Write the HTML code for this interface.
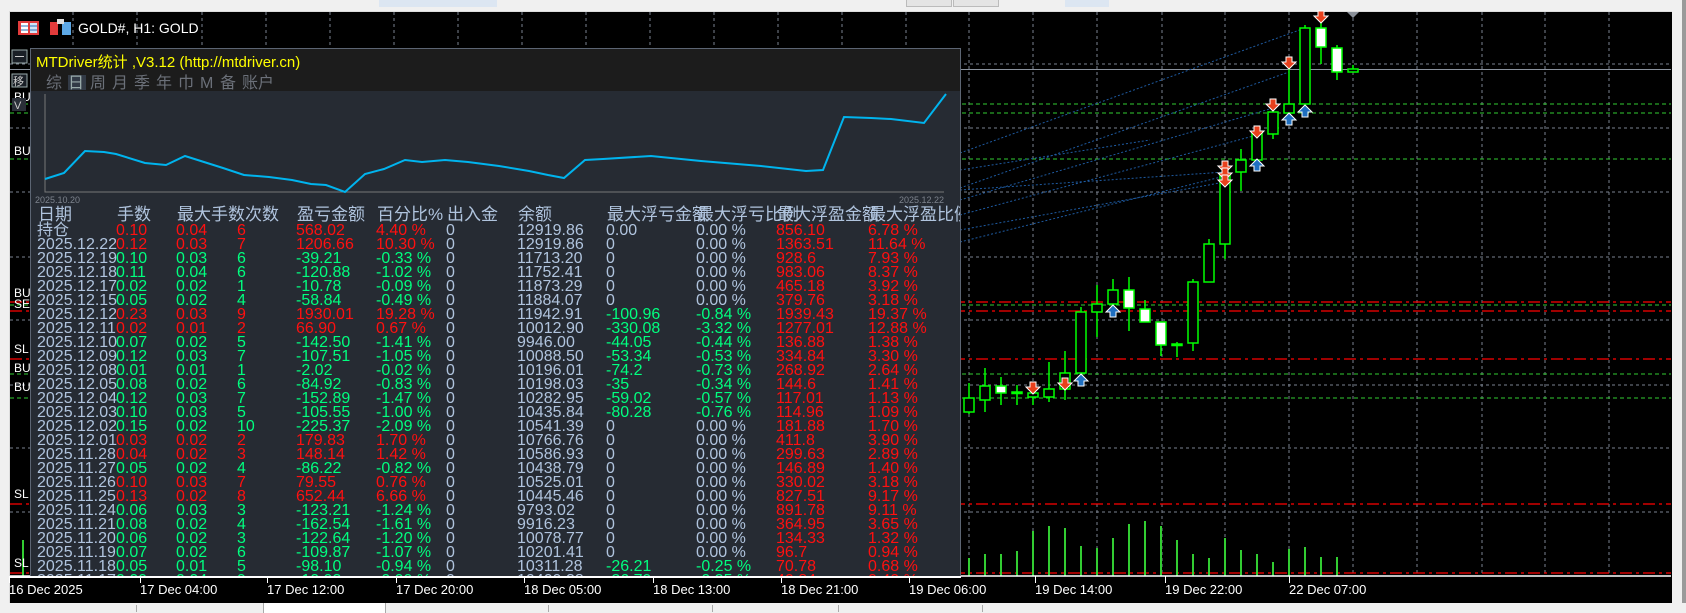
<!DOCTYPE html>
<html><head><meta charset="utf-8">
<style>
html,body{margin:0;padding:0;width:1686px;height:612px;overflow:hidden;background:#f0f0f0;font-family:"Liberation Sans","Noto Sans CJK SC",sans-serif;}
#top{position:absolute;left:0;top:0;width:1686px;height:10px;background:#f0f0f0;}
#chart{position:absolute;left:9px;top:11px;width:1662px;height:592px;background:#000;border-top:1px solid #ddd;border-left:1px solid #ddd;}
svg{position:absolute;left:0;top:0;}
#panel{position:absolute;left:30px;top:48px;width:929px;height:555px;background:#262b33;border:1px solid #5c6573;border-bottom:none;overflow:hidden;}
#ptitle{position:absolute;left:0;top:0;width:929px;height:42px;background:#1c1c1c;}
.t{position:absolute;white-space:pre;font-size:16px;line-height:16px;}
.b{color:#b0c4de}.r{color:#ff1010}.g{color:#00ff7f}
.tab{position:absolute;top:27px;font-size:16px;color:#6b7079;line-height:16px;}
#tabs{position:absolute;left:0;top:603px;width:1686px;height:9px;background:#f0f0f0;}
</style></head><body>
<div id="top">
 <div style="position:absolute;left:379px;top:0;width:118px;height:7px;background:#dce6f2"></div>
 <div style="position:absolute;left:906px;top:0;width:44px;height:6px;background:#e4e4e4;border:1px solid #bbb;border-top:none"></div>
 <div style="position:absolute;left:953px;top:0;width:44px;height:6px;background:#e4e4e4;border:1px solid #bbb;border-top:none"></div>
 <div style="position:absolute;left:1065px;top:0;width:44px;height:7px;background:#dce6f2"></div>
</div>
<div style="position:absolute;left:1682px;top:0;width:4px;height:612px;background:#9a9a9a"></div>
<div id="chart"></div>
<svg width="1686" height="612" viewBox="0 0 1686 612">
<defs>
 <g id="dn"><polygon points="-3,-6 3,-6 3,-1 7,-1 0,6 -7,-1 -3,-1" fill="#e8401c" stroke="#fff" stroke-width="1"/></g>
 <g id="up"><polygon points="-3,6 3,6 3,1 7,1 0,-6 -7,1 -3,1" fill="#1f6fc0" stroke="#fff" stroke-width="1"/></g>
</defs>
<g stroke="#7a8290" stroke-width="1" stroke-dasharray="3,3" fill="none">
 <path d="M10,64H1671M10,128H1671M10,192H1671M10,257H1671M10,320H1671M10,385H1671M10,448H1671M10,512H1671"/>
 <path d="M73,12V576M137,12V576M202,12V576M266,12V576M330,12V576M394,12V576M458,12V576M522,12V576M586,12V576M650,12V576M714,12V576M778,12V576M842,12V576M906,12V576M969,12V576M1033,12V576M1097,12V576M1162,12V576M1225,12V576M1289,12V576M1353,12V576M1417,12V576M1482,12V576M1545,12V576M1609,12V576"/>
</g>
<path d="M10,69.5H1671" stroke="#8a929e" stroke-width="1"/>
<g stroke="#32cd32" stroke-width="1" stroke-dasharray="4,3" fill="none">
 <path d="M10,104H1671M10,113H1671M10,159H1671M10,305H1671M10,374H1671M10,398H1671"/>
</g>
<g stroke="#ff0000" stroke-width="1.3" stroke-dasharray="12,4,3,4" fill="none">
 <path d="M10,302H1671M10,311H1671M10,359H1671M10,504H1671M10,573H1671"/>
</g>
<g stroke="#1e5aa0" stroke-width="1" stroke-dasharray="2,2" fill="none">
 <path d="M960,153L1305,28M960,188L1289,72M960,200L1273,108M960,215L1257,135M960,230L1225,182M960,242L1225,176M960,190L1225,172M960,170L1150,140"/>
</g>
<polygon points="1347,12 1359,12 1353,18" fill="#8a9099"/>
<g fill="#32cd32">
<rect x="968" y="558" width="2" height="18"/><rect x="984" y="554" width="2" height="22"/><rect x="1000" y="554" width="2" height="22"/><rect x="1016" y="551" width="2" height="25"/><rect x="1032" y="531" width="2" height="45"/><rect x="1048" y="526" width="2" height="50"/><rect x="1064" y="528" width="2" height="48"/><rect x="1080" y="546" width="2" height="30"/><rect x="1096" y="548" width="2" height="28"/><rect x="1112" y="538" width="2" height="38"/><rect x="1128" y="524" width="2" height="52"/><rect x="1144" y="521" width="2" height="55"/><rect x="1160" y="526" width="2" height="50"/><rect x="1176" y="540" width="2" height="36"/><rect x="1192" y="554" width="2" height="22"/>
<rect x="1208" y="558" width="2" height="18"/><rect x="1224" y="538" width="2" height="38"/><rect x="1240" y="550" width="2" height="26"/><rect x="1256" y="554" width="2" height="22"/><rect x="1272" y="562" width="2" height="14"/><rect x="1288" y="549" width="2" height="27"/><rect x="1304" y="547" width="2" height="29"/><rect x="1320" y="557" width="2" height="19"/><rect x="1336" y="557" width="2" height="19"/>
<rect x="22" y="540" width="2" height="36"/>
</g>
<g stroke="#00ff00" stroke-width="1.5">
<path d="M969,383V414M985,368V412M1001,377V405M1017,385V405M1033,385V405M1049,362V402M1065,351V400M1081,307V373M1097,285V337M1113,279V305M1129,277V331M1145,300V322M1161,322V356M1177,342V357M1193,279V351M1209,239V282M1225,167V259M1241,149V191M1257,126V160M1273,112V139M1289,67V113M1305,25V104M1321,23V64M1337,45V80M1353,65V72"/>
</g>
<g stroke="#00ff00" stroke-width="1.5">
<rect x="964" y="398" width="10" height="14" fill="#000"/>
<rect x="980" y="386" width="10" height="14" fill="#000"/>
<rect x="996" y="386" width="10" height="7" fill="#fff"/>
<rect x="1012" y="392" width="10" height="1.5" fill="#fff"/>
<rect x="1028" y="393" width="10" height="4" fill="#000"/>
<rect x="1044" y="389" width="10" height="8" fill="#000"/>
<rect x="1060" y="373" width="10" height="16" fill="#000"/>
<rect x="1076" y="312" width="10" height="61" fill="#000"/>
<rect x="1092" y="304" width="10" height="8" fill="#000"/>
<rect x="1108" y="290" width="10" height="14" fill="#000"/>
<rect x="1124" y="290" width="10" height="18" fill="#fff"/>
<rect x="1140" y="309" width="10" height="13" fill="#fff"/>
<rect x="1156" y="322" width="10" height="23" fill="#fff"/>
<rect x="1172" y="344" width="10" height="1.5" fill="#fff"/>
<rect x="1188" y="282" width="10" height="61" fill="#000"/>
<rect x="1204" y="244" width="10" height="38" fill="#000"/>
<rect x="1220" y="174" width="10" height="70" fill="#000"/>
<rect x="1236" y="160" width="10" height="12" fill="#000"/>
<rect x="1252" y="133" width="10" height="27" fill="#000"/>
<rect x="1268" y="112" width="10" height="22" fill="#000"/>
<rect x="1284" y="104" width="10" height="9" fill="#000"/>
<rect x="1300" y="28" width="10" height="76" fill="#000"/>
<rect x="1316" y="28" width="10" height="19" fill="#fff"/>
<rect x="1332" y="48" width="10" height="24" fill="#fff"/>
<rect x="1348" y="69" width="10" height="3" fill="#000"/>
</g>
<use href="#dn" x="1321" y="17"/><use href="#dn" x="1289" y="63"/><use href="#dn" x="1273" y="105"/><use href="#dn" x="1257" y="132"/><use href="#dn" x="1225" y="167"/><use href="#dn" x="1225" y="174"/><use href="#dn" x="1225" y="181"/><use href="#dn" x="1033" y="388"/><use href="#dn" x="1065" y="384"/>
<use href="#up" x="1305" y="111"/><use href="#up" x="1289" y="119"/><use href="#up" x="1257" y="165"/><use href="#up" x="1113" y="311"/><use href="#up" x="1081" y="380"/>
<path d="M10,576H1671" stroke="#fff" stroke-width="1.5"/>
<g stroke="#fff"><path d="M1035.5,576V583M1165.5,576V583M1289.5,576V583"/></g>
<g fill="#fff" font-family="Liberation Sans,sans-serif" font-size="13">
<text x="1035" y="594">19 Dec 14:00</text><text x="1165" y="594">19 Dec 22:00</text><text x="1289" y="594">22 Dec 07:00</text>
</g>
<g font-family="Liberation Sans,sans-serif" font-size="12" fill="#fff">
<text x="14" y="101">BU</text><text x="14" y="155">BU</text><text x="14" y="297">BU</text><text x="14" y="308">SE</text><text x="14" y="353">SL</text><text x="14" y="372">BU</text><text x="14" y="391">BU</text><text x="14" y="498">SL</text><text x="14" y="567">SL</text>
</g>
<rect x="18" y="21" width="21" height="14" fill="#e23b3b"/><rect x="21" y="23" width="7" height="10" fill="#fff"/><rect x="30" y="23" width="7" height="10" fill="#cfe3f5"/><path d="M21,26H28M21,30H28M30,26H37M30,30H37" stroke="#2a6fb5"/>
<rect x="50" y="22" width="8" height="13" fill="#e23b3b"/><rect x="62" y="22" width="9" height="13" fill="#5da8e6"/><rect x="57" y="19" width="7" height="5" fill="#ddd"/>
<text x="78" y="33" fill="#fff" font-family="Liberation Sans,sans-serif" font-size="14">GOLD#, H1:  GOLD</text>
<rect x="12" y="50" width="15" height="13" fill="#1a1f26" stroke="#9aa" /><path d="M15,56.5H24" stroke="#ccc"/>
<rect x="12" y="74" width="15" height="13" fill="#1a1f26" stroke="#9aa"/><text x="13" y="85" fill="#ccc" font-size="11" font-family="Noto Sans CJK SC,sans-serif">移</text>
<rect x="12" y="98" width="14" height="13" fill="#2a2f38"/><text x="14" y="109" fill="#ccc" font-size="11">V</text>
</svg>
<div id="panel">
 <div id="ptitle"></div>
 <div class="t" style="left:5px;top:6px;color:#ffff00;font-size:15px;">MTDriver统计 ,V3.12 (http://mtdriver.cn)</div>
 <div style="position:absolute;left:37px;top:26px;width:18px;height:15px;background:#323a46"></div>
 <div class="tab" style="left:15px">综</div><div class="tab" style="left:37px;color:#9aa">日</div><div class="tab" style="left:59px">周</div><div class="tab" style="left:81px">月</div><div class="tab" style="left:103px">季</div><div class="tab" style="left:125px">年</div><div class="tab" style="left:147px">巾</div><div class="tab" style="left:169px">M</div><div class="tab" style="left:189px">备</div><div class="tab" style="left:211px">账户</div>
 <svg width="929" height="160" style="left:0;top:0">
  <path d="M14,45V143H913" stroke="#777" fill="none"/>
  <polyline fill="none" stroke="#00b4ee" stroke-width="2" points="14,130 33,124 54,102 73,103 85,105 114,114 135,116 154,107 173,113 192,119 213,126 238,128 261,131 280,135 295,136 314,143 334,125 353,120 374,111 391,113 414,111 437,113 468,117 498,122 517,126 533,129 554,111 572,110 620,107 670,112 730,117 775,122 792,121 813,68 840,69 860,70 893,74 915,45"/>
  <text x="4" y="154" fill="#7d838d" font-size="9" font-family="Liberation Sans,sans-serif">2025.10.20</text>
  <text x="868" y="154" fill="#7d838d" font-size="9" font-family="Liberation Sans,sans-serif">2025.12.22</text>
 </svg>
 <div style="position:absolute;left:-30px;top:-48px;">
 <div class="t b" style="top:206px;left:37px;font-size:17px">日期</div><div class="t b" style="top:206px;left:116px;font-size:17px">手数</div><div class="t b" style="top:206px;left:176px;font-size:17px">最大手数次数</div><div class="t b" style="top:206px;left:296px;font-size:17px">盈亏金额</div><div class="t b" style="top:206px;left:376px;font-size:17px">百分比%</div><div class="t b" style="top:206px;left:446px;font-size:17px">出入金</div><div class="t b" style="top:206px;left:517px;font-size:17px">余额</div><div class="t b" style="top:206px;left:606px;font-size:17px">最大浮亏金额</div><div class="t b" style="top:206px;left:696px;font-size:17px">最大浮亏比例</div><div class="t b" style="top:206px;left:776px;font-size:17px">最大浮盈金额</div><div class="t b" style="top:206px;left:868px;font-size:17px">最大浮盈比例</div>
 </div>
</div>
<div id="tabs">
 <div style="position:absolute;left:263px;top:-3px;width:121px;height:12px;background:#fff;border:1px solid #aaa;border-bottom:none"></div>
 <div style="position:absolute;left:136px;top:2px;width:1px;height:7px;background:#aaa"></div>
 <div style="position:absolute;left:548px;top:2px;width:1px;height:7px;background:#aaa"></div>
 <div style="position:absolute;left:712px;top:2px;width:1px;height:7px;background:#aaa"></div>
 <div style="position:absolute;left:838px;top:2px;width:1px;height:7px;background:#aaa"></div>
 <div style="position:absolute;left:982px;top:2px;width:1px;height:7px;background:#aaa"></div>
</div>
<div style="position:absolute;left:30px;top:48px;width:929px;height:555px;pointer-events:none">
<div style="position:absolute;left:-30px;top:-48px">
<div class="t b" style="top:223px;left:37px">持仓</div><div class="t r" style="top:223px;left:116px">0.10</div><div class="t r" style="top:223px;left:176px">0.04</div><div class="t r" style="top:223px;left:237px">6</div><div class="t r" style="top:223px;left:296px">568.02</div><div class="t r" style="top:223px;left:376px">4.40 %</div><div class="t b" style="top:223px;left:446px">0</div><div class="t b" style="top:223px;left:517px">12919.86</div><div class="t b" style="top:223px;left:606px">0.00</div><div class="t b" style="top:223px;left:696px">0.00 %</div><div class="t r" style="top:223px;left:776px">856.10</div><div class="t r" style="top:223px;left:868px">6.78 %</div>
<div class="t b" style="top:237px;left:37px">2025.12.22</div><div class="t r" style="top:237px;left:116px">0.12</div><div class="t r" style="top:237px;left:176px">0.03</div><div class="t r" style="top:237px;left:237px">7</div><div class="t r" style="top:237px;left:296px">1206.66</div><div class="t r" style="top:237px;left:376px">10.30 %</div><div class="t b" style="top:237px;left:446px">0</div><div class="t b" style="top:237px;left:517px">12919.86</div><div class="t b" style="top:237px;left:606px">0</div><div class="t b" style="top:237px;left:696px">0.00 %</div><div class="t r" style="top:237px;left:776px">1363.51</div><div class="t r" style="top:237px;left:868px">11.64 %</div>
<div class="t b" style="top:251px;left:37px">2025.12.19</div><div class="t g" style="top:251px;left:116px">0.10</div><div class="t g" style="top:251px;left:176px">0.03</div><div class="t g" style="top:251px;left:237px">6</div><div class="t g" style="top:251px;left:296px">-39.21</div><div class="t g" style="top:251px;left:376px">-0.33 %</div><div class="t b" style="top:251px;left:446px">0</div><div class="t b" style="top:251px;left:517px">11713.20</div><div class="t b" style="top:251px;left:606px">0</div><div class="t b" style="top:251px;left:696px">0.00 %</div><div class="t r" style="top:251px;left:776px">928.6</div><div class="t r" style="top:251px;left:868px">7.93 %</div>
<div class="t b" style="top:265px;left:37px">2025.12.18</div><div class="t g" style="top:265px;left:116px">0.11</div><div class="t g" style="top:265px;left:176px">0.04</div><div class="t g" style="top:265px;left:237px">6</div><div class="t g" style="top:265px;left:296px">-120.88</div><div class="t g" style="top:265px;left:376px">-1.02 %</div><div class="t b" style="top:265px;left:446px">0</div><div class="t b" style="top:265px;left:517px">11752.41</div><div class="t b" style="top:265px;left:606px">0</div><div class="t b" style="top:265px;left:696px">0.00 %</div><div class="t r" style="top:265px;left:776px">983.06</div><div class="t r" style="top:265px;left:868px">8.37 %</div>
<div class="t b" style="top:279px;left:37px">2025.12.17</div><div class="t g" style="top:279px;left:116px">0.02</div><div class="t g" style="top:279px;left:176px">0.02</div><div class="t g" style="top:279px;left:237px">1</div><div class="t g" style="top:279px;left:296px">-10.78</div><div class="t g" style="top:279px;left:376px">-0.09 %</div><div class="t b" style="top:279px;left:446px">0</div><div class="t b" style="top:279px;left:517px">11873.29</div><div class="t b" style="top:279px;left:606px">0</div><div class="t b" style="top:279px;left:696px">0.00 %</div><div class="t r" style="top:279px;left:776px">465.18</div><div class="t r" style="top:279px;left:868px">3.92 %</div>
<div class="t b" style="top:293px;left:37px">2025.12.15</div><div class="t g" style="top:293px;left:116px">0.05</div><div class="t g" style="top:293px;left:176px">0.02</div><div class="t g" style="top:293px;left:237px">4</div><div class="t g" style="top:293px;left:296px">-58.84</div><div class="t g" style="top:293px;left:376px">-0.49 %</div><div class="t b" style="top:293px;left:446px">0</div><div class="t b" style="top:293px;left:517px">11884.07</div><div class="t b" style="top:293px;left:606px">0</div><div class="t b" style="top:293px;left:696px">0.00 %</div><div class="t r" style="top:293px;left:776px">379.76</div><div class="t r" style="top:293px;left:868px">3.18 %</div>
<div class="t b" style="top:307px;left:37px">2025.12.12</div><div class="t r" style="top:307px;left:116px">0.23</div><div class="t r" style="top:307px;left:176px">0.03</div><div class="t r" style="top:307px;left:237px">9</div><div class="t r" style="top:307px;left:296px">1930.01</div><div class="t r" style="top:307px;left:376px">19.28 %</div><div class="t b" style="top:307px;left:446px">0</div><div class="t b" style="top:307px;left:517px">11942.91</div><div class="t g" style="top:307px;left:606px">-100.96</div><div class="t g" style="top:307px;left:696px">-0.84 %</div><div class="t r" style="top:307px;left:776px">1939.43</div><div class="t r" style="top:307px;left:868px">19.37 %</div>
<div class="t b" style="top:321px;left:37px">2025.12.11</div><div class="t r" style="top:321px;left:116px">0.02</div><div class="t r" style="top:321px;left:176px">0.01</div><div class="t r" style="top:321px;left:237px">2</div><div class="t r" style="top:321px;left:296px">66.90</div><div class="t r" style="top:321px;left:376px">0.67 %</div><div class="t b" style="top:321px;left:446px">0</div><div class="t b" style="top:321px;left:517px">10012.90</div><div class="t g" style="top:321px;left:606px">-330.08</div><div class="t g" style="top:321px;left:696px">-3.32 %</div><div class="t r" style="top:321px;left:776px">1277.01</div><div class="t r" style="top:321px;left:868px">12.88 %</div>
<div class="t b" style="top:335px;left:37px">2025.12.10</div><div class="t g" style="top:335px;left:116px">0.07</div><div class="t g" style="top:335px;left:176px">0.02</div><div class="t g" style="top:335px;left:237px">5</div><div class="t g" style="top:335px;left:296px">-142.50</div><div class="t g" style="top:335px;left:376px">-1.41 %</div><div class="t b" style="top:335px;left:446px">0</div><div class="t b" style="top:335px;left:517px">9946.00</div><div class="t g" style="top:335px;left:606px">-44.05</div><div class="t g" style="top:335px;left:696px">-0.44 %</div><div class="t r" style="top:335px;left:776px">136.88</div><div class="t r" style="top:335px;left:868px">1.38 %</div>
<div class="t b" style="top:349px;left:37px">2025.12.09</div><div class="t g" style="top:349px;left:116px">0.12</div><div class="t g" style="top:349px;left:176px">0.03</div><div class="t g" style="top:349px;left:237px">7</div><div class="t g" style="top:349px;left:296px">-107.51</div><div class="t g" style="top:349px;left:376px">-1.05 %</div><div class="t b" style="top:349px;left:446px">0</div><div class="t b" style="top:349px;left:517px">10088.50</div><div class="t g" style="top:349px;left:606px">-53.34</div><div class="t g" style="top:349px;left:696px">-0.53 %</div><div class="t r" style="top:349px;left:776px">334.84</div><div class="t r" style="top:349px;left:868px">3.30 %</div>
<div class="t b" style="top:363px;left:37px">2025.12.08</div><div class="t g" style="top:363px;left:116px">0.01</div><div class="t g" style="top:363px;left:176px">0.01</div><div class="t g" style="top:363px;left:237px">1</div><div class="t g" style="top:363px;left:296px">-2.02</div><div class="t g" style="top:363px;left:376px">-0.02 %</div><div class="t b" style="top:363px;left:446px">0</div><div class="t b" style="top:363px;left:517px">10196.01</div><div class="t g" style="top:363px;left:606px">-74.2</div><div class="t g" style="top:363px;left:696px">-0.73 %</div><div class="t r" style="top:363px;left:776px">268.92</div><div class="t r" style="top:363px;left:868px">2.64 %</div>
<div class="t b" style="top:377px;left:37px">2025.12.05</div><div class="t g" style="top:377px;left:116px">0.08</div><div class="t g" style="top:377px;left:176px">0.02</div><div class="t g" style="top:377px;left:237px">6</div><div class="t g" style="top:377px;left:296px">-84.92</div><div class="t g" style="top:377px;left:376px">-0.83 %</div><div class="t b" style="top:377px;left:446px">0</div><div class="t b" style="top:377px;left:517px">10198.03</div><div class="t g" style="top:377px;left:606px">-35</div><div class="t g" style="top:377px;left:696px">-0.34 %</div><div class="t r" style="top:377px;left:776px">144.6</div><div class="t r" style="top:377px;left:868px">1.41 %</div>
<div class="t b" style="top:391px;left:37px">2025.12.04</div><div class="t g" style="top:391px;left:116px">0.12</div><div class="t g" style="top:391px;left:176px">0.03</div><div class="t g" style="top:391px;left:237px">7</div><div class="t g" style="top:391px;left:296px">-152.89</div><div class="t g" style="top:391px;left:376px">-1.47 %</div><div class="t b" style="top:391px;left:446px">0</div><div class="t b" style="top:391px;left:517px">10282.95</div><div class="t g" style="top:391px;left:606px">-59.02</div><div class="t g" style="top:391px;left:696px">-0.57 %</div><div class="t r" style="top:391px;left:776px">117.01</div><div class="t r" style="top:391px;left:868px">1.13 %</div>
<div class="t b" style="top:405px;left:37px">2025.12.03</div><div class="t g" style="top:405px;left:116px">0.10</div><div class="t g" style="top:405px;left:176px">0.03</div><div class="t g" style="top:405px;left:237px">5</div><div class="t g" style="top:405px;left:296px">-105.55</div><div class="t g" style="top:405px;left:376px">-1.00 %</div><div class="t b" style="top:405px;left:446px">0</div><div class="t b" style="top:405px;left:517px">10435.84</div><div class="t g" style="top:405px;left:606px">-80.28</div><div class="t g" style="top:405px;left:696px">-0.76 %</div><div class="t r" style="top:405px;left:776px">114.96</div><div class="t r" style="top:405px;left:868px">1.09 %</div>
<div class="t b" style="top:419px;left:37px">2025.12.02</div><div class="t g" style="top:419px;left:116px">0.15</div><div class="t g" style="top:419px;left:176px">0.02</div><div class="t g" style="top:419px;left:237px">10</div><div class="t g" style="top:419px;left:296px">-225.37</div><div class="t g" style="top:419px;left:376px">-2.09 %</div><div class="t b" style="top:419px;left:446px">0</div><div class="t b" style="top:419px;left:517px">10541.39</div><div class="t b" style="top:419px;left:606px">0</div><div class="t b" style="top:419px;left:696px">0.00 %</div><div class="t r" style="top:419px;left:776px">181.88</div><div class="t r" style="top:419px;left:868px">1.70 %</div>
<div class="t b" style="top:433px;left:37px">2025.12.01</div><div class="t r" style="top:433px;left:116px">0.03</div><div class="t r" style="top:433px;left:176px">0.02</div><div class="t r" style="top:433px;left:237px">2</div><div class="t r" style="top:433px;left:296px">179.83</div><div class="t r" style="top:433px;left:376px">1.70 %</div><div class="t b" style="top:433px;left:446px">0</div><div class="t b" style="top:433px;left:517px">10766.76</div><div class="t b" style="top:433px;left:606px">0</div><div class="t b" style="top:433px;left:696px">0.00 %</div><div class="t r" style="top:433px;left:776px">411.8</div><div class="t r" style="top:433px;left:868px">3.90 %</div>
<div class="t b" style="top:447px;left:37px">2025.11.28</div><div class="t r" style="top:447px;left:116px">0.04</div><div class="t r" style="top:447px;left:176px">0.02</div><div class="t r" style="top:447px;left:237px">3</div><div class="t r" style="top:447px;left:296px">148.14</div><div class="t r" style="top:447px;left:376px">1.42 %</div><div class="t b" style="top:447px;left:446px">0</div><div class="t b" style="top:447px;left:517px">10586.93</div><div class="t b" style="top:447px;left:606px">0</div><div class="t b" style="top:447px;left:696px">0.00 %</div><div class="t r" style="top:447px;left:776px">299.63</div><div class="t r" style="top:447px;left:868px">2.89 %</div>
<div class="t b" style="top:461px;left:37px">2025.11.27</div><div class="t g" style="top:461px;left:116px">0.05</div><div class="t g" style="top:461px;left:176px">0.02</div><div class="t g" style="top:461px;left:237px">4</div><div class="t g" style="top:461px;left:296px">-86.22</div><div class="t g" style="top:461px;left:376px">-0.82 %</div><div class="t b" style="top:461px;left:446px">0</div><div class="t b" style="top:461px;left:517px">10438.79</div><div class="t b" style="top:461px;left:606px">0</div><div class="t b" style="top:461px;left:696px">0.00 %</div><div class="t r" style="top:461px;left:776px">146.89</div><div class="t r" style="top:461px;left:868px">1.40 %</div>
<div class="t b" style="top:475px;left:37px">2025.11.26</div><div class="t r" style="top:475px;left:116px">0.10</div><div class="t r" style="top:475px;left:176px">0.03</div><div class="t r" style="top:475px;left:237px">7</div><div class="t r" style="top:475px;left:296px">79.55</div><div class="t r" style="top:475px;left:376px">0.76 %</div><div class="t b" style="top:475px;left:446px">0</div><div class="t b" style="top:475px;left:517px">10525.01</div><div class="t b" style="top:475px;left:606px">0</div><div class="t b" style="top:475px;left:696px">0.00 %</div><div class="t r" style="top:475px;left:776px">330.02</div><div class="t r" style="top:475px;left:868px">3.18 %</div>
<div class="t b" style="top:489px;left:37px">2025.11.25</div><div class="t r" style="top:489px;left:116px">0.13</div><div class="t r" style="top:489px;left:176px">0.02</div><div class="t r" style="top:489px;left:237px">8</div><div class="t r" style="top:489px;left:296px">652.44</div><div class="t r" style="top:489px;left:376px">6.66 %</div><div class="t b" style="top:489px;left:446px">0</div><div class="t b" style="top:489px;left:517px">10445.46</div><div class="t b" style="top:489px;left:606px">0</div><div class="t b" style="top:489px;left:696px">0.00 %</div><div class="t r" style="top:489px;left:776px">827.51</div><div class="t r" style="top:489px;left:868px">9.17 %</div>
<div class="t b" style="top:503px;left:37px">2025.11.24</div><div class="t g" style="top:503px;left:116px">0.06</div><div class="t g" style="top:503px;left:176px">0.03</div><div class="t g" style="top:503px;left:237px">3</div><div class="t g" style="top:503px;left:296px">-123.21</div><div class="t g" style="top:503px;left:376px">-1.24 %</div><div class="t b" style="top:503px;left:446px">0</div><div class="t b" style="top:503px;left:517px">9793.02</div><div class="t b" style="top:503px;left:606px">0</div><div class="t b" style="top:503px;left:696px">0.00 %</div><div class="t r" style="top:503px;left:776px">891.78</div><div class="t r" style="top:503px;left:868px">9.11 %</div>
<div class="t b" style="top:517px;left:37px">2025.11.21</div><div class="t g" style="top:517px;left:116px">0.08</div><div class="t g" style="top:517px;left:176px">0.02</div><div class="t g" style="top:517px;left:237px">4</div><div class="t g" style="top:517px;left:296px">-162.54</div><div class="t g" style="top:517px;left:376px">-1.61 %</div><div class="t b" style="top:517px;left:446px">0</div><div class="t b" style="top:517px;left:517px">9916.23</div><div class="t b" style="top:517px;left:606px">0</div><div class="t b" style="top:517px;left:696px">0.00 %</div><div class="t r" style="top:517px;left:776px">364.95</div><div class="t r" style="top:517px;left:868px">3.65 %</div>
<div class="t b" style="top:531px;left:37px">2025.11.20</div><div class="t g" style="top:531px;left:116px">0.06</div><div class="t g" style="top:531px;left:176px">0.02</div><div class="t g" style="top:531px;left:237px">3</div><div class="t g" style="top:531px;left:296px">-122.64</div><div class="t g" style="top:531px;left:376px">-1.20 %</div><div class="t b" style="top:531px;left:446px">0</div><div class="t b" style="top:531px;left:517px">10078.77</div><div class="t b" style="top:531px;left:606px">0</div><div class="t b" style="top:531px;left:696px">0.00 %</div><div class="t r" style="top:531px;left:776px">134.33</div><div class="t r" style="top:531px;left:868px">1.32 %</div>
<div class="t b" style="top:545px;left:37px">2025.11.19</div><div class="t g" style="top:545px;left:116px">0.07</div><div class="t g" style="top:545px;left:176px">0.02</div><div class="t g" style="top:545px;left:237px">6</div><div class="t g" style="top:545px;left:296px">-109.87</div><div class="t g" style="top:545px;left:376px">-1.07 %</div><div class="t b" style="top:545px;left:446px">0</div><div class="t b" style="top:545px;left:517px">10201.41</div><div class="t b" style="top:545px;left:606px">0</div><div class="t b" style="top:545px;left:696px">0.00 %</div><div class="t r" style="top:545px;left:776px">96.7</div><div class="t r" style="top:545px;left:868px">0.94 %</div>
<div class="t b" style="top:559px;left:37px">2025.11.18</div><div class="t g" style="top:559px;left:116px">0.05</div><div class="t g" style="top:559px;left:176px">0.01</div><div class="t g" style="top:559px;left:237px">5</div><div class="t g" style="top:559px;left:296px">-98.10</div><div class="t g" style="top:559px;left:376px">-0.94 %</div><div class="t b" style="top:559px;left:446px">0</div><div class="t b" style="top:559px;left:517px">10311.28</div><div class="t g" style="top:559px;left:606px">-26.21</div><div class="t g" style="top:559px;left:696px">-0.25 %</div><div class="t r" style="top:559px;left:776px">70.78</div><div class="t r" style="top:559px;left:868px">0.68 %</div>
<div class="t b" style="top:573px;left:37px">2025.11.17</div><div class="t g" style="top:573px;left:116px">0.09</div><div class="t g" style="top:573px;left:176px">0.04</div><div class="t g" style="top:573px;left:237px">9</div><div class="t g" style="top:573px;left:296px">-10.93</div><div class="t g" style="top:573px;left:376px">-0.09 %</div><div class="t b" style="top:573px;left:446px">0</div><div class="t b" style="top:573px;left:517px">10409.38</div><div class="t g" style="top:573px;left:606px">-26.79</div><div class="t g" style="top:573px;left:696px">-0.25 %</div><div class="t r" style="top:573px;left:776px">40.84</div><div class="t r" style="top:573px;left:868px">0.40 %</div>
</div>
</div>
<div style="position:absolute;left:0;top:576px;width:1686px;height:36px;pointer-events:none">
 <div style="position:absolute;left:10px;top:0;width:951px;height:1.5px;background:#fff"></div>
 <div style="position:absolute;left:10px;top:1.5px;width:951px;height:25.5px;background:#000"></div>
</div>
<svg width="1686" height="612" style="pointer-events:none">
<g fill="#fff" font-family="Liberation Sans,sans-serif" font-size="13">
<text x="9" y="594">16 Dec 2025</text><text x="140" y="594">17 Dec 04:00</text><text x="267" y="594">17 Dec 12:00</text><text x="396" y="594">17 Dec 20:00</text><text x="524" y="594">18 Dec 05:00</text><text x="653" y="594">18 Dec 13:00</text><text x="781" y="594">18 Dec 21:00</text><text x="909" y="594">19 Dec 06:00</text>
</g>
<g stroke="#fff"><path d="M9.5,576V583M140.5,576V583M267.5,576V583M396.5,576V583M524.5,576V583M653.5,576V583M781.5,576V583M909.5,576V583"/></g>
</svg>
</body></html>
